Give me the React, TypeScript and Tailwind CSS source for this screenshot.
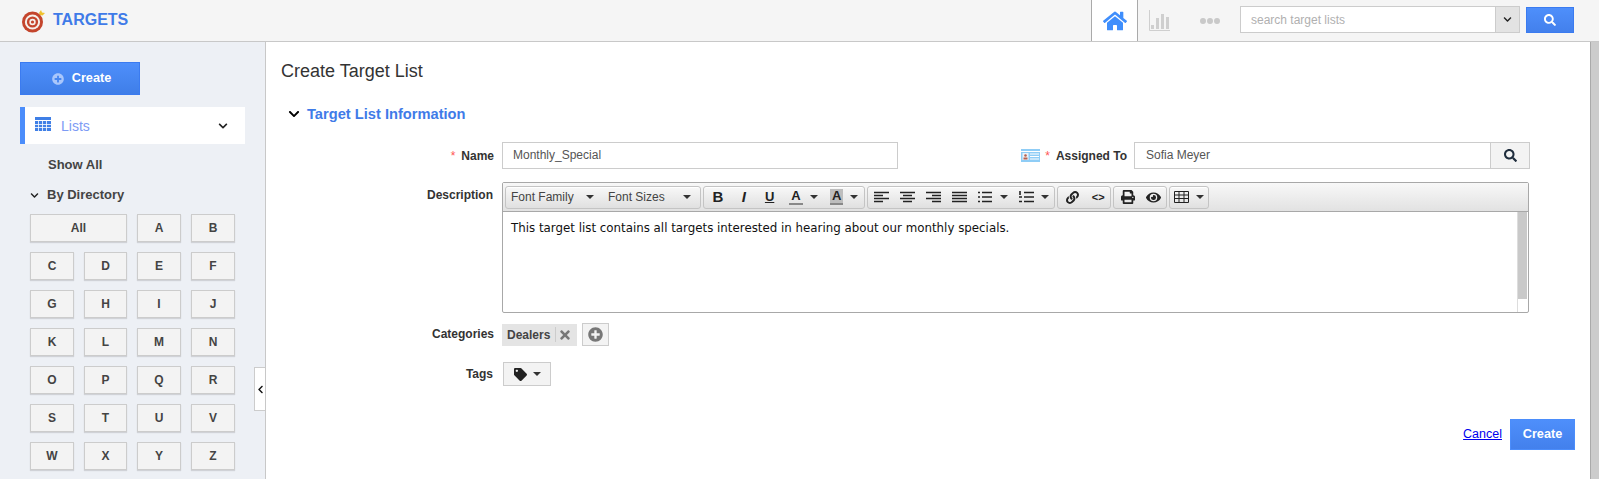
import React from "react";
import { FaHome, FaSearch, FaTag, FaPrint, FaEye, FaLink, FaPlusCircle, FaTimes, FaChevronDown, FaChevronLeft } from "react-icons/fa";

const sans = "font-['Liberation_Sans',Arial,sans-serif]";
const letterRows = [
  ["C", "D", "E", "F"],
  ["G", "H", "I", "J"],
  ["K", "L", "M", "N"],
  ["O", "P", "Q", "R"],
  ["S", "T", "U", "V"],
  ["W", "X", "Y", "Z"],
];

const Caret = () => (
  <span className="inline-block w-0 h-0 border-x-[4px] border-x-transparent border-t-[4px] border-t-[#333]" />
);

const Chevron = ({ size = 10 }: { size?: number }) => (
  <FaChevronDown size={size} className="text-[#222]" />
);

const LetterButton = ({ label, wide }: { label: string; wide?: boolean }) => (
  <button
    className={`h-[28px] bg-[#f3f3f3] border border-[#ccc] shadow-[0_1px_1px_rgba(0,0,0,0.12)] text-[12px] font-bold text-[#444] ${
      wide ? "col-span-2" : ""
    }`}
  >
    {label}
  </button>
);

const Logo = () => (
  <svg width="25" height="24" viewBox="0 0 25 24">
    <circle cx="11.5" cy="13" r="10.5" fill="#c4452c" />
    <circle cx="11.5" cy="13" r="7.6" fill="#f6f1ec" />
    <circle cx="11.5" cy="13" r="5.6" fill="#c4452c" />
    <circle cx="11.5" cy="13" r="3.2" fill="#f6f1ec" />
    <circle cx="11.5" cy="13" r="1.6" fill="#c4452c" />
    <path d="M18 4l2-3 1 2.400 3 .6-2.500 2.500-2.500-.5z" fill="#efc22f" />
  </svg>
);

const HomeIcon = () => <FaHome size={24} className="text-[#3f8efc]" />;

const ChartIcon = () => (
  <svg width="21" height="21" viewBox="0 0 21 21" className="text-[#cfcfcf]">
    <path d="M0.500 0v20.500H21" fill="none" stroke="currentColor" />
    <path d="M2 15h3v4H2zM7 8h3v11H7zM12 4h3v15h-3zM17 7h3v12h-3z" fill="currentColor" />
  </svg>
);

const Dots = () => (
  <div className="flex gap-[1px]">
    <span className="w-[6px] h-[6px] rounded-full bg-[#c9c9c9]" />
    <span className="w-[6px] h-[6px] rounded-full bg-[#c9c9c9]" />
    <span className="w-[6px] h-[6px] rounded-full bg-[#c9c9c9]" />
  </div>
);

const CardIcon = () => (
  <svg width="19" height="13" viewBox="0 0 19 13">
    <rect width="19" height="13" fill="#8fcdf6" />
    <rect y="2" width="19" height="1" fill="#fff" />
    <rect x="1.500" y="4" width="6" height="7" fill="#e8f3fb" />
    <circle cx="4.500" cy="6.500" r="1.300" fill="#b8614e" />
    <rect x="2.500" y="8.500" width="4" height="2" fill="#b8614e" />
    <path d="M9 5h9M9 7.500h9M9 10h9" stroke="#fff" />
  </svg>
);

// lines of the alignment and list buttons
const AlignIcon = ({ d }: { d: string }) => (
  <svg width="15" height="12" viewBox="0 0 15 12" className="text-[#222]">
    <path d={d} stroke="currentColor" strokeWidth="1.600" fill="none" />
  </svg>
);

const ToolGroup = ({ children, className = "" }: { children: React.ReactNode; className?: string }) => (
  <div
    className={`flex h-[23px] items-center border border-[#c4c4c4] rounded-[3px] bg-gradient-to-b from-[#f8f8f8] to-[#e0e0e0] shadow-[inset_0_1px_0_#fff] ${className}`}
  >
    {children}
  </div>
);

const Tool = ({ children, width }: { children: React.ReactNode; width: string }) => (
  <div className={`flex h-full items-center justify-center gap-[7px] ${width}`}>{children}</div>
);

const Editor = () => (
  <div className="w-[1027px] h-[131px] border border-[#a8a8a8] rounded-[2px] flex flex-col">
    <div className="h-[29px] shrink-0 flex items-center gap-[2px] pl-[2px] border-b border-[#a8a8a8] bg-gradient-to-b from-[#f8f8f8] to-[#e2e2e2]">
      <ToolGroup className="w-[196px] text-[12px] text-[#444]">
        <div className="w-[97px] flex items-center justify-between pl-[5px] pr-[9px]">
          <span>Font Family</span>
          <Caret />
        </div>
        <div className="w-[97px] flex items-center justify-between pl-[5px] pr-[9px]">
          <span>Font Sizes</span>
          <Caret />
        </div>
      </ToolGroup>
      <ToolGroup className="w-[162px] pl-[1px] text-[#222]">
        <Tool width="w-[26px]">
          <span className="text-[15px] font-bold">B</span>
        </Tool>
        <Tool width="w-[26px]">
          <span className="text-[15px] font-bold italic">I</span>
        </Tool>
        <Tool width="w-[26px]">
          <span className="text-[13px] font-bold underline">U</span>
        </Tool>
        <Tool width="w-[42px]">
          <span className="text-[13px] font-bold border-b-[2px] border-[#888] leading-[14px] px-[2px]">A</span>
          <Caret />
        </Tool>
        <Tool width="w-[40px]">
          <span className="text-[13px] font-bold border-b-[2px] border-[#888] bg-[#bdbdbd] leading-[14px] px-[2px]">A</span>
          <Caret />
        </Tool>
      </ToolGroup>
      <ToolGroup className="w-[188px]">
        <Tool width="w-[26px]">
          <AlignIcon d="M0 1.500h15M0 4.500h9M0 7.500h15M0 10.500h9" />
        </Tool>
        <Tool width="w-[26px]">
          <AlignIcon d="M0 1.500h15M3 4.500h9M0 7.500h15M3 10.500h9" />
        </Tool>
        <Tool width="w-[26px]">
          <AlignIcon d="M0 1.500h15M6 4.500h9M0 7.500h15M6 10.500h9" />
        </Tool>
        <Tool width="w-[26px]">
          <AlignIcon d="M0 1.500h15M0 4.500h15M0 7.500h15M0 10.500h15" />
        </Tool>
        <Tool width="w-[41px]">
          <AlignIcon d="M0 1.500h2M4 1.500h10M0 6h2M4 6h10M0 10.500h2M4 10.500h10" />
          <Caret />
        </Tool>
        <Tool width="w-[41px]">
          <AlignIcon d="M1 0v4M0 6h3M0 10.500h3M5 1.500h10M5 6h10M5 10.500h10" />
          <Caret />
        </Tool>
      </ToolGroup>
      <ToolGroup className="w-[54px] text-[#222]">
        <Tool width="w-[29px]">
          <FaLink size={13} />
        </Tool>
        <Tool width="w-[24px]">
          <span className="text-[11px] font-bold">&lt;&gt;</span>
        </Tool>
      </ToolGroup>
      <ToolGroup className="w-[54px] text-[#222]">
        <Tool width="w-[28px]">
          <FaPrint size={14} />
        </Tool>
        <Tool width="w-[25px]">
          <FaEye size={15} />
        </Tool>
      </ToolGroup>
      <ToolGroup className="w-[40px] text-[#222]">
        <Tool width="w-full">
          <svg width="15" height="12" viewBox="0 0 15 12">
            <path d="M.500.500h14v11H.500zM.500 4h14M.500 7.500h14M5 .5v11M10 .5v11" stroke="currentColor" fill="none" />
          </svg>
          <Caret />
        </Tool>
      </ToolGroup>
    </div>
    <div className="flex-1 flex min-h-0">
      <p className="flex-1 pl-[8px] pt-[7px] font-['DejaVu_Sans',sans-serif] text-[11.83px] leading-[18px] text-[#111]">
        This target list contains all targets interested in hearing about our monthly specials.
      </p>
      <div className="w-[10px] mr-[1px] flex flex-col border-l border-[#ddd]">
        <div className="h-[87px] bg-[#c9c9c9]" />
      </div>
    </div>
  </div>
);

const Sidebar = () => (
  <aside className="relative w-[266px] shrink-0 bg-[#edf0f5] border-r border-[#c8c8c8] pl-[20px] pt-[20px]">
    <button className="flex items-center justify-center gap-[8px] pl-[3px] w-[120px] h-[33px] bg-gradient-to-b from-[#4e8ffb] to-[#3f7ee8] border border-[#3b7bf0] text-white text-[12.7px] font-bold">
      <FaPlusCircle size={12} className="text-[#a9c6fb]" />
      Create
    </button>
    <div className="mt-[12px] w-[225px] h-[37px] flex items-center bg-white border-l-[5px] border-[#4b8dfb] pl-[10px] pr-[17px]">
      <svg width="16" height="14" viewBox="0 0 16 14" className="text-[#3f7fe6] mb-[3px]">
        <path d="M0 0h16v3H0z" fill="currentColor" />
        <path d="M0 4h16v10H0z" fill="currentColor" />
        <path d="M3.500 4v10M7.500 4v10M11.500 4v10M0 7.500h16M0 10.500h16" stroke="#fff" strokeWidth=".8" />
      </svg>
      <span className="ml-[10px] mt-[1px] text-[14px] text-[#7d9bf5]">Lists</span>
      <span className="ml-auto">
        <Chevron />
      </span>
    </div>
    <div className="mt-[12px] pl-[28px] text-[13px] font-bold text-[#444] leading-[18px]">Show All</div>
    <div className="mt-[12px] pl-[10px] flex items-center gap-[8px] text-[13px] font-bold text-[#444] leading-[18px]">
      <Chevron size={9} />
      By Directory
    </div>
    <div className="mt-[10px] ml-[10px] flex flex-col gap-[10px] w-[205px]">
      <div className="grid grid-cols-[44px_43px_44px_44px] gap-x-[10px]">
        <LetterButton label="All" wide />
        <LetterButton label="A" />
        <LetterButton label="B" />
      </div>
      {letterRows.map((row) => (
        <div key={row[0]} className="grid grid-cols-[44px_43px_44px_44px] gap-x-[10px]">
          {row.map((letter) => (
            <LetterButton key={letter} label={letter} />
          ))}
        </div>
      ))}
    </div>
    <button className="absolute right-0 top-[325px] w-[11px] h-[44px] flex items-center justify-center bg-white border border-r-0 border-[#ccc]">
      <FaChevronLeft size={9} className="text-[#111]" />
    </button>
  </aside>
);

const Label = ({ children, required }: { children: React.ReactNode; required?: boolean }) => (
  <label className="text-[12px] font-bold text-[#333] whitespace-nowrap">
    {required && <span className="text-[#f55] font-normal mr-[6px]">*</span>}
    {children}
  </label>
);

const Main = () => (
  <main className="flex-1 min-w-0 relative">
    <h1 className="pl-[15px] pt-[17px] text-[18px] leading-[24px] text-[#333]">Create Target List</h1>
    <div className="mt-[21px] pl-[22px] flex items-center gap-[7px]">
      <FaChevronDown size={12} className="text-black" />
      <h2 className="text-[14.667px] leading-[20px] font-bold text-[#3f7be8]">Target List Information</h2>
    </div>
    <div className="mt-[18px] grid grid-cols-[228px_1fr] gap-x-[8px]">
      <div className="h-[27px] flex items-center justify-end">
        <Label required>Name</Label>
      </div>
      <div className="flex items-center">
        <input
          readOnly
          value="Monthly_Special"
          className="w-[396px] h-[27px] px-[10px] pb-[1px] border border-[#ccc] text-[12px] text-[#555] outline-none"
        />
        <div className="w-[229px] flex items-center justify-end gap-[5px]">
          <CardIcon />
          <Label required>Assigned To</Label>
        </div>
        <input
          readOnly
          value="Sofia Meyer"
          className="ml-[7px] w-[357px] h-[27px] px-[11px] pb-[1px] border border-[#ccc] text-[12px] text-[#555] outline-none"
        />
        <button className="w-[39px] h-[27px] flex items-center justify-center bg-[#f3f3f3] border border-l-0 border-[#ccc]">
          <FaSearch size={13} className="text-[#1f2d3d]" />
        </button>
      </div>
      <div className="mt-[13px] pt-[4px] pr-[1px] h-[22px] flex items-center justify-end">
        <Label>Description</Label>
      </div>
      <div className="mt-[13px]">
        <Editor />
      </div>
      <div className="mt-[10px] h-[23px] pb-[2px] flex items-center justify-end">
        <Label>Categories</Label>
      </div>
      <div className="mt-[10px] flex items-center">
        <span className="w-[75px] h-[22px] flex items-center bg-[#e4e4e4] pl-[5px] text-[12px] font-bold text-[#444]">
          Dealers
          <span className="ml-[5px] pl-[2px] h-[15px] flex items-center border-l border-[#ccc]">
            <FaTimes size={14} className="text-[#777]" />
          </span>
        </span>
        <button className="ml-[5px] w-[27px] h-[23px] flex items-center justify-center bg-[#f3f3f3] border border-[#ccc]">
          <FaPlusCircle size={15} className="text-[#777]" />
        </button>
      </div>
      <div className="mt-[16px] h-[24px] pr-[1px] flex items-center justify-end">
        <Label>Tags</Label>
      </div>
      <div className="mt-[16px]">
        <button className="ml-[1px] w-[48px] h-[24px] flex items-center justify-center gap-[6px] bg-[#f3f3f3] border border-[#ccc]">
          <FaTag size={13} className="text-[#222]" />
          <Caret />
        </button>
      </div>
    </div>
    <div className="absolute right-[15px] top-[377px] flex items-center gap-[8px]">
      <a href="#" className="text-[12.5px] text-[#00e] underline mb-[1px]">
        Cancel
      </a>
      <button className="w-[65px] h-[31px] bg-gradient-to-b from-[#4e8ffb] to-[#4380ec] border border-[#4b8dfb] text-white text-[12.7px] font-bold">
        Create
      </button>
    </div>
  </main>
);

const App: React.FC = () => {
  return (
    <div className={`${sans} w-[1599px] h-[479px] overflow-hidden flex flex-col bg-white`}>
      <header className="h-[42px] shrink-0 flex items-center bg-[#f5f5f5] border-b border-[#c8c8c8] pl-[21px]">
        <Logo />
        <span className="ml-[7px] mb-[2px] text-[16px] font-bold text-[#3f7be8]">TARGETS</span>
        <div className="ml-auto h-full flex items-center">
          <div className="w-[47px] h-full flex items-center justify-center bg-white border-x border-[#aaa]">
            <HomeIcon />
          </div>
          <div className="w-[62px] flex pl-[11px]">
            <ChartIcon />
          </div>
          <Dots />
          <div className="ml-[20px] mb-[2px] w-[280px] h-[27px] flex border border-[#ccc] bg-white">
            <div className="flex-1 flex items-center pl-[10px] text-[12px] text-[#b0b0b0]">search target lists</div>
            <div className="w-[24px] flex items-center justify-center bg-[#e3e3e3] border-l border-[#ccc]">
              <Chevron size={9} />
            </div>
          </div>
          <button className="ml-[6px] mb-[2px] mr-[25px] w-[48px] h-[26px] flex items-center justify-center bg-gradient-to-b from-[#4e8ffb] to-[#4380ec] border border-[#3b7bf0]">
            <FaSearch size={12} className="text-white" />
          </button>
        </div>
      </header>
      <div className="flex-1 min-h-0 flex">
        <Sidebar />
        <Main />
        <div className="w-[9px] shrink-0 bg-[#ccc] border-l border-[#aaa]" />
      </div>
    </div>
  );
};

export default App;
